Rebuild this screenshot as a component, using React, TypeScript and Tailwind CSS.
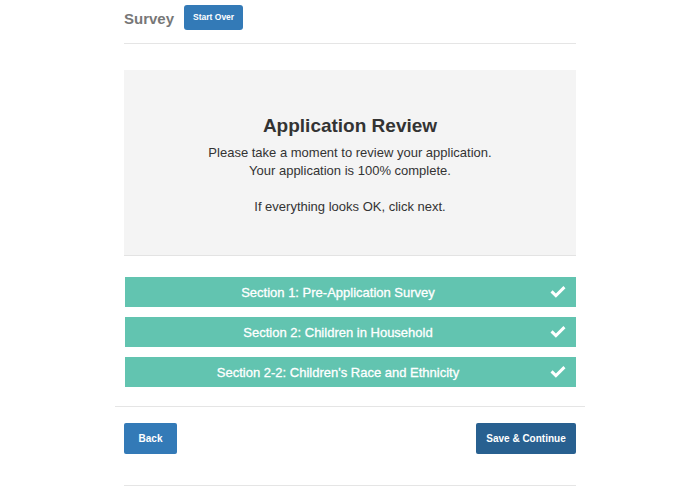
import React from 'react';

const sections = [
  'Section 1: Pre-Application Survey',
  'Section 2: Children in Household',
  "Section 2-2: Children's Race and Ethnicity",
];

const Check = () => (
  <svg viewBox="0 0 16 12" className="h-[12px] w-[16px]" fill="white">
    <path d="M0.5 6.4 L2.6 4.3 L5.9 7.6 L13.4 0.1 L15.5 2.2 L5.9 11.8 Z" />
  </svg>
);

export default function App() {
  return (
    <div className="min-h-[494px] w-full bg-white font-['Liberation_Sans',Arial,sans-serif] text-[#333]">
      <div className="ml-[124px] w-[452px]">
        <div className="flex h-[44px] items-start gap-[10px] border-b border-[#e5e5e5] pt-[5px]">
          <span className="mt-[4px] text-[15px] font-bold leading-[20px] text-[#777]">Survey</span>
          <button className="h-[25px] rounded-[3px] bg-[#337ab7] px-[9px] text-[8.5px] font-bold text-white">
            Start Over
          </button>
        </div>

        <div className="mt-[26px] flex h-[186px] flex-col items-center border-b border-[#e3e3e3] bg-[#f4f4f4] pt-[44px] text-center">
          <h1 className="text-[19px] font-bold leading-[24px] text-[#333]">Application Review</h1>
          <p className="mt-[6px] text-[13px] leading-[18px] text-[#333]">
            Please take a moment to review your application.
            <br />
            Your application is 100% complete.
          </p>
          <p className="mt-[18px] text-[13px] leading-[18px] text-[#333]">
            If everything looks OK, click next.
          </p>
        </div>

        <div className="mt-[21px] flex flex-col gap-[10px] pl-[1px]">
          {sections.map((s) => (
            <div
              key={s}
              className="relative flex h-[30px] items-center justify-center bg-[#62c4b0] pr-[25px] pt-[2px] text-[13px] text-white"
            >
              <span className="[-webkit-text-stroke:0.3px_white]">{s}</span>
              <span className="absolute right-[10px] top-[9px]">
                <Check />
              </span>
            </div>
          ))}
        </div>
      </div>

      <div className="ml-[115px] mt-[19px] w-[470px] border-t border-[#e5e5e5]">
        <div className="ml-[9px] flex w-[452px] justify-between pt-[16px]">
          <button className="h-[31px] w-[53px] rounded-[2px] bg-[#337ab7] text-[10px] font-bold text-white">
            Back
          </button>
          <button className="h-[31px] w-[100px] rounded-[2px] bg-[#286090] text-[10px] font-bold text-white">
            Save &amp; Continue
          </button>
        </div>
      </div>

      <div className="ml-[124px] mt-[31px] w-[452px] border-t border-[#e5e5e5]" />
    </div>
  );
}
